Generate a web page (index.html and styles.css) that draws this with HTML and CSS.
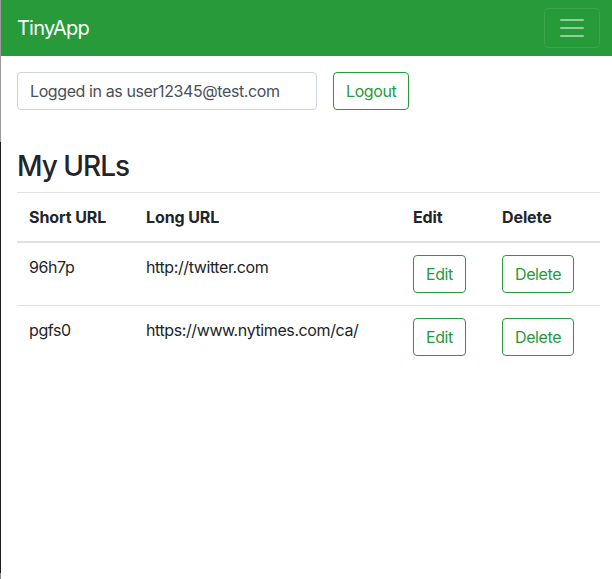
FILE: index.html
```html
<!DOCTYPE html>
<html lang="en">
<head>
<meta charset="utf-8">
<title>TinyApp</title>
<link rel="stylesheet" href="styles.css">
</head>
<body>
  <nav class="navbar">
    <a class="brand" href="#">TinyApp</a>
    <button class="toggler" type="button" aria-label="Toggle navigation">
      <svg width="30" height="30" viewBox="0 0 30 30" aria-hidden="true">
        <path d="M4 7h22M4 15h22M4 23h22" stroke="rgba(255,255,255,0.5)" stroke-width="2" stroke-linecap="round"/>
      </svg>
    </button>
  </nav>
  <main class="content">
    <form class="login-form">
      <input class="form-input" type="text" value="Logged in as user12345@test.com" readonly>
      <button class="btn" type="button">Logout</button>
    </form>
    <h3 class="title">My URLs</h3>
    <table class="url-table">
      <thead>
        <tr>
          <th class="col-short">Short URL</th>
          <th class="col-long">Long URL</th>
          <th class="col-edit">Edit</th>
          <th class="col-delete">Delete</th>
        </tr>
      </thead>
      <tbody>
        <tr>
          <td>96h7p</td>
          <td>http://twitter.com</td>
          <td><button class="btn" type="button">Edit</button></td>
          <td><button class="btn" type="button">Delete</button></td>
        </tr>
        <tr>
          <td>pgfs0</td>
          <td>https://www.nytimes.com/ca/</td>
          <td><button class="btn" type="button">Edit</button></td>
          <td><button class="btn" type="button">Delete</button></td>
        </tr>
      </tbody>
    </table>
  </main>
</body>
</html>
```
FILE: styles.css
```css
html, body {
  margin: 0;
  padding: 0;
  height: 100%;
}
body {
  font-family: Inter, "Liberation Sans", sans-serif;
  font-size: 16px;
  line-height: 1.5;
  letter-spacing: -0.4px;
  color: #212529;
  background: #fff;
  border-left: 1px solid #222;
  border-image: linear-gradient(to bottom, #9a9a9a 0, #9a9a9a 143px, #1e1e1e 143px, #1e1e1e 572px, #8a8a8a 572px) 1;
  box-sizing: border-box;
}
.navbar {
  display: flex;
  align-items: center;
  justify-content: space-between;
  height: 56px;
  box-sizing: border-box;
  padding: 8px 12px 8px 16px;
  background: #279a3a;
}
.brand {
  color: #fff;
  font-size: 20px;
  line-height: 30px;
  letter-spacing: -0.8px;
  text-decoration: none;
}
.toggler {
  display: flex;
  align-items: center;
  justify-content: center;
  width: 56px;
  height: 40px;
  padding: 0;
  background: transparent;
  border: 1px solid rgba(255,255,255,0.1);
  border-radius: 4px;
}
.toggler svg { display: block; }
.content {
  padding: 16px 12px 0 16px;
}
.login-form {
  display: flex;
  gap: 16px;
  margin: 0;
}
.form-input {
  width: 300px;
  height: 38px;
  box-sizing: border-box;
  padding: 6px 12px;
  font: inherit;
  letter-spacing: -0.4px;
  color: #495057;
  border: 1px solid #ced4da;
  border-radius: 4px;
  background: #fff;
  outline: none;
}
.btn {
  height: 38px;
  box-sizing: border-box;
  padding: 6px 12px;
  font: inherit;
  letter-spacing: -0.4px;
  color: #279a3a;
  background: transparent;
  border: 1px solid #279a3a;
  border-radius: 4px;
  cursor: pointer;
}
.title {
  margin: 40px 0 8px;
  font-size: 28px;
  font-weight: 500;
  line-height: 1.2;
  letter-spacing: -1px;
}
.url-table {
  width: 100%;
  border-collapse: collapse;
}
.url-table th,
.url-table td {
  padding: 12px;
  text-align: left;
  vertical-align: top;
  border-top: 1px solid #dee2e6;
}
.url-table th {
  font-weight: 700;
  letter-spacing: -0.1px;
  vertical-align: bottom;
  border-bottom: 2px solid #dee2e6;
}
.col-short { width: 93px; }
.col-long { width: 243px; }
.col-edit { width: 65px; }
```
